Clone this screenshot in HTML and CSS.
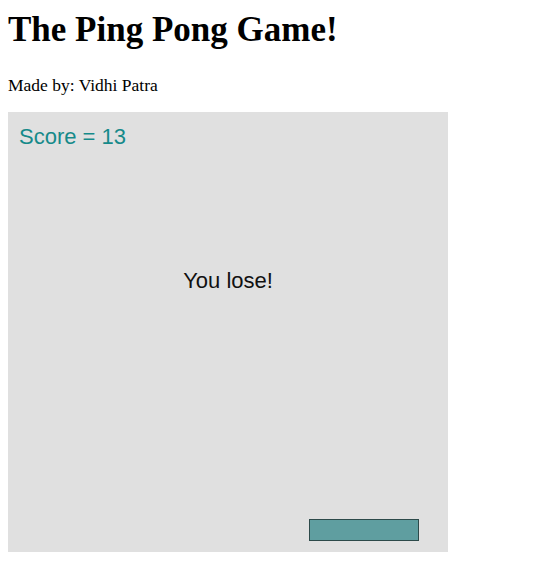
FILE: index.html
```html
<!DOCTYPE html>
<html lang="en">
<head>
    <meta charset="UTF-8">
    <meta name="viewport" content="width=device-width, initial-scale=1.0">
    <title>The Ping Pong Game!</title>
    <link rel="stylesheet" href="styles.css">
</head>
<body>
    <h1>The Ping Pong Game!</h1>
    <p>Made by: Vidhi Patra</p>

    <div class="board" id="board">
        <div class="score" id="score">Score = 13</div>
        <div class="message" id="message">You lose!</div>
        <div class="paddle" id="paddle" style="left: 301px;"></div>
    </div>
</body>
</html>
```

FILE: styles.css
```css
body {
    font-family: "Liberation Serif", "Times New Roman", serif;
    margin: 8px;
    color: #000;
    background: #fff;
}

h1 {
    font-size: 35px;
    margin: 2px 0 25px;
}

p {
    font-size: 17.5px;
    margin: 0 0 16px;
}

.board {
    position: relative;
    width: 440px;
    height: 440px;
    background-color: #e0e0e0;
    font-family: "Liberation Sans", Arial, sans-serif;
}

.score {
    padding: 12px 0 0 11px;
    font-size: 22px;
    color: #168a8a;
}

.message {
    position: absolute;
    top: 156px;
    left: 0;
    right: 0;
    text-align: center;
    font-size: 22px;
    color: #111;
}

.paddle {
    position: absolute;
    bottom: 11px;
    width: 108px;
    height: 20px;
    background-color: #5f9ea0;
    border: 1px solid #2d4a4a;
}
```
